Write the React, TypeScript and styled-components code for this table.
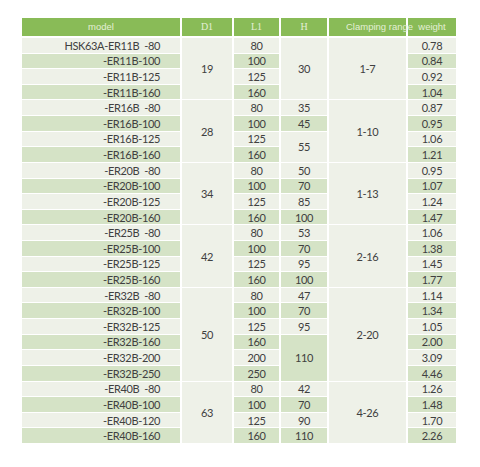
import styled, { createGlobalStyle } from "styled-components";

const GlobalStyle = createGlobalStyle`
  body {
    margin: 0;
    background: #ffffff;
  }
`;

const Page = styled.div`
  width: 480px;
  height: 467px;
  padding: 18px 0 0 22px;
  box-sizing: border-box;
  background: #ffffff;
`;

const COLS = "158px 50px 45px 46px 77px 48px";

const Head = styled.div`
  display: grid;
  grid-template-columns: ${COLS};
  column-gap: 2px;
  height: 18px;
`;

const HeadCell = styled.div<{ $serif?: boolean; $indent?: number }>`
  background: #89bb57;
  color: #e4efd6;
  font-family: ${(p) =>
    p.$serif ? '"Liberation Serif", serif' : '"Liberation Sans", sans-serif'};
  font-size: ${(p) => (p.$serif ? "10px" : "9.5px")};
  line-height: 18px;
  white-space: nowrap;
  text-align: ${(p) => (p.$indent !== undefined ? "left" : "center")};
  padding-left: ${(p) => p.$indent ?? 0}px;
  overflow: visible;
  position: relative;
  z-index: ${(p) => (p.$indent !== undefined ? 1 : 0)};
`;

const Body = styled.div`
  display: grid;
  grid-template-columns: ${COLS};
  grid-template-rows: repeat(26, 1fr);
  column-gap: 2px;
  row-gap: 1px;
  height: 405px;
  margin-top: 2px;
`;

const Cell = styled.div<{ $green?: boolean; $right?: boolean }>`
  background: ${(p) => (p.$green ? "#d5e3c6" : "#eef1e8")};
  color: #404040;
  font-family: Lato, "Liberation Sans", sans-serif;
  font-size: 11px;
  letter-spacing: -0.35px;
  display: flex;
  align-items: center;
  justify-content: ${(p) => (p.$right ? "flex-end" : "center")};
  padding-right: ${(p) => (p.$right ? "20px" : "0")};
  white-space: pre;
`;

type Row = { model: string; l1: string; weight: string };

const rows: Row[] = [
  { model: "HSK63A-ER11B  -80", l1: "80", weight: "0.78" },
  { model: "-ER11B-100", l1: "100", weight: "0.84" },
  { model: "-ER11B-125", l1: "125", weight: "0.92" },
  { model: "-ER11B-160", l1: "160", weight: "1.04" },
  { model: "-ER16B  -80", l1: "80", weight: "0.87" },
  { model: "-ER16B-100", l1: "100", weight: "0.95" },
  { model: "-ER16B-125", l1: "125", weight: "1.06" },
  { model: "-ER16B-160", l1: "160", weight: "1.21" },
  { model: "-ER20B  -80", l1: "80", weight: "0.95" },
  { model: "-ER20B-100", l1: "100", weight: "1.07" },
  { model: "-ER20B-125", l1: "125", weight: "1.24" },
  { model: "-ER20B-160", l1: "160", weight: "1.47" },
  { model: "-ER25B  -80", l1: "80", weight: "1.06" },
  { model: "-ER25B-100", l1: "100", weight: "1.38" },
  { model: "-ER25B-125", l1: "125", weight: "1.45" },
  { model: "-ER25B-160", l1: "160", weight: "1.77" },
  { model: "-ER32B  -80", l1: "80", weight: "1.14" },
  { model: "-ER32B-100", l1: "100", weight: "1.34" },
  { model: "-ER32B-125", l1: "125", weight: "1.05" },
  { model: "-ER32B-160", l1: "160", weight: "2.00" },
  { model: "-ER32B-200", l1: "200", weight: "3.09" },
  { model: "-ER32B-250", l1: "250", weight: "4.46" },
  { model: "-ER40B  -80", l1: "80", weight: "1.26" },
  { model: "-ER40B-100", l1: "100", weight: "1.48" },
  { model: "-ER40B-120", l1: "125", weight: "1.70" },
  { model: "-ER40B-160", l1: "160", weight: "2.26" },
];

// merged cells: start row (1-based), span, value
type Span = { start: number; span: number; value: string };

const d1: Span[] = [
  { start: 1, span: 4, value: "19" },
  { start: 5, span: 4, value: "28" },
  { start: 9, span: 4, value: "34" },
  { start: 13, span: 4, value: "42" },
  { start: 17, span: 6, value: "50" },
  { start: 23, span: 4, value: "63" },
];

const clamp: Span[] = [
  { start: 1, span: 4, value: "1-7" },
  { start: 5, span: 4, value: "1-10" },
  { start: 9, span: 4, value: "1-13" },
  { start: 13, span: 4, value: "2-16" },
  { start: 17, span: 6, value: "2-20" },
  { start: 23, span: 4, value: "4-26" },
];

const h: Span[] = [
  { start: 1, span: 4, value: "30" },
  { start: 5, span: 1, value: "35" },
  { start: 6, span: 1, value: "45" },
  { start: 7, span: 2, value: "55" },
  { start: 9, span: 1, value: "50" },
  { start: 10, span: 1, value: "70" },
  { start: 11, span: 1, value: "85" },
  { start: 12, span: 1, value: "100" },
  { start: 13, span: 1, value: "53" },
  { start: 14, span: 1, value: "70" },
  { start: 15, span: 1, value: "95" },
  { start: 16, span: 1, value: "100" },
  { start: 17, span: 1, value: "47" },
  { start: 18, span: 1, value: "70" },
  { start: 19, span: 1, value: "95" },
  { start: 20, span: 3, value: "110" },
  { start: 23, span: 1, value: "42" },
  { start: 24, span: 1, value: "70" },
  { start: 25, span: 1, value: "90" },
  { start: 26, span: 1, value: "110" },
];

const isGreen = (r: number) => r % 2 === 0;

export default function App() {
  return (
    <>
      <GlobalStyle />
      <Page>
        <Head>
          <HeadCell>model</HeadCell>
          <HeadCell $serif>D1</HeadCell>
          <HeadCell $serif>L1</HeadCell>
          <HeadCell $serif>H</HeadCell>
          <HeadCell $indent={17}>Clamping range</HeadCell>
          <HeadCell>weight</HeadCell>
        </Head>
        <Body>
          {rows.map((r, i) => (
            <Cell
              key={"m" + i}
              $right
              $green={isGreen(i + 1)}
              style={{ gridColumn: 1, gridRow: i + 1 }}
            >
              {r.model}
            </Cell>
          ))}
          {d1.map((s) => (
            <Cell
              key={"d" + s.start}
              style={{ gridColumn: 2, gridRow: `${s.start} / span ${s.span}` }}
            >
              {s.value}
            </Cell>
          ))}
          {rows.map((r, i) => (
            <Cell
              key={"l" + i}
              $green={isGreen(i + 1)}
              style={{ gridColumn: 3, gridRow: i + 1 }}
            >
              {r.l1}
            </Cell>
          ))}
          {h.map((s) => (
            <Cell
              key={"h" + s.start}
              $green={s.span === 3 || (s.span === 1 && isGreen(s.start))}
              style={{ gridColumn: 4, gridRow: `${s.start} / span ${s.span}` }}
            >
              {s.value}
            </Cell>
          ))}
          {clamp.map((s) => (
            <Cell
              key={"c" + s.start}
              style={{ gridColumn: 5, gridRow: `${s.start} / span ${s.span}` }}
            >
              {s.value}
            </Cell>
          ))}
          {rows.map((r, i) => (
            <Cell
              key={"w" + i}
              $green={isGreen(i + 1)}
              style={{ gridColumn: 6, gridRow: i + 1 }}
            >
              {r.weight}
            </Cell>
          ))}
        </Body>
      </Page>
    </>
  );
}
